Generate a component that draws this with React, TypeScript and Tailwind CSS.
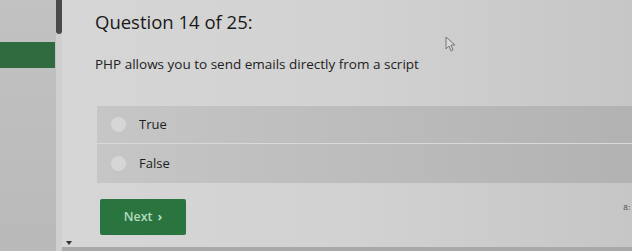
import * as React from "react"

function Cursor() {
  return (
    <svg width="11" height="16" viewBox="0 0 11 16" className="absolute left-[383px] top-[36px]">
      <path d="M1 1 L1 13 L4 10 L6 15 L8 14 L6 9 L10 9 Z" fill="#d8d8d8" stroke="#777" strokeWidth="1" strokeLinejoin="round" />
    </svg>
  )
}

export default function App() {
  return (
    <div
      className="relative flex h-[251px] w-[632px] overflow-hidden bg-[#cdcdcd] text-[#1e1e1e]"
      style={{ fontFamily: '"Open Sans", "Noto Sans", Arial, sans-serif' }}
    >
      {/* sidebar */}
      <aside className="flex w-[56px] shrink-0 flex-col bg-gradient-to-b from-[#c2c2c2] to-[#b9b9b9]">
        <div className="h-[42px]" />
        <div className="h-[26px] w-[55px] bg-[#2f6b3e]" />
      </aside>
      <div className="flex w-[6px] shrink-0 flex-col bg-[#cfcfcf]">
        <div className="h-[34px] w-[6px] rounded-b-[3px] bg-[#4a4a4a]" />
      </div>

      {/* main */}
      <main className="relative flex flex-1 flex-col bg-gradient-to-r from-[#d6d6d6] via-[#d2d2d2] to-[#c6c6c6]">
        <h1 className="ml-[33px] mt-[10px] text-[18.5px] leading-[24px] text-[#1a1a1a]">Question 14 of 25:</h1>
        <p className="ml-[33px] mt-[21px] text-[13.5px] leading-[18px] text-[#222]">
          PHP allows you to send emails directly from a script
        </p>

        <div className="ml-[35px] mt-[33px] flex flex-col bg-gradient-to-r from-[#c6c6c6] to-[#b2b2b2]">
          <label className="flex h-[38px] items-center border-b border-[#d9d9d9]">
            <span className="ml-[14px] h-[15px] w-[15px] rounded-full bg-[#d6d6d6]" />
            <span className="ml-[13px] text-[13px] text-[#1e1e1e]">True</span>
          </label>
          <label className="flex h-[39px] items-center">
            <span className="ml-[14px] h-[15px] w-[15px] rounded-full bg-[#d6d6d6]" />
            <span className="ml-[13px] text-[13px] text-[#1e1e1e]">False</span>
          </label>
        </div>

        <div className="ml-[38px] mt-[16px] flex items-start justify-between">
          <button className="flex h-[36px] w-[86px] items-center justify-center gap-[5px] rounded-[2px] bg-[#2a7440] text-[12.5px] font-semibold text-[#b3dcbd]">
            Next <span className="text-[13px] font-bold">›</span>
          </button>
          <span className="mt-[2px] mr-[2px] text-[8px] text-[#444]">8:</span>
        </div>

        <div className="mt-auto flex h-[6px] items-end">
          <div className="ml-[4px] mb-[2px] h-0 w-0 border-x-[3px] border-t-[4px] border-x-transparent border-t-[#333]" />
        </div>
        <div className="h-[4px] bg-[#a9a9a9]" />
        <Cursor />
      </main>
    </div>
  )
}
